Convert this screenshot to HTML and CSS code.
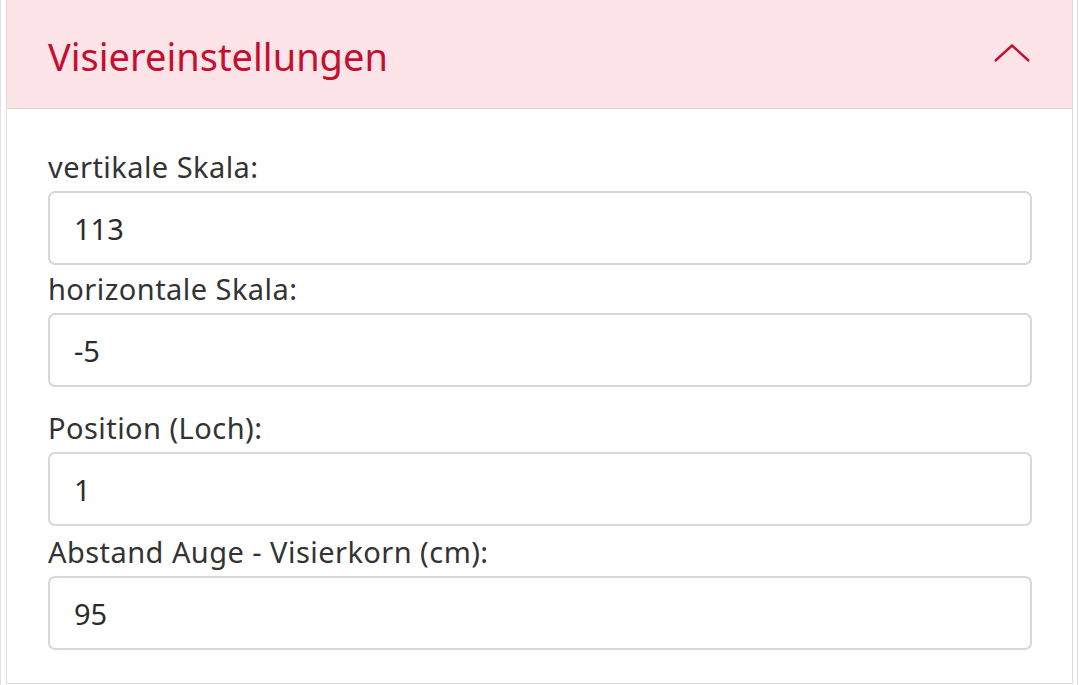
FILE: index.html
```html
<!DOCTYPE html>
<html lang="de">
<head>
  <meta charset="UTF-8">
  <title>Visiereinstellungen</title>
  <link rel="stylesheet" href="styles.css">
</head>
<body>
  <div class="frame">
    <div class="accordion-item">
      <div class="accordion-header">
        <span class="accordion-title">Visiereinstellungen</span>
        <svg class="chevron" width="36" height="18" viewBox="0 0 36 18">
          <path d="M1 17 L18 1.5 L35 17" fill="none" stroke="#c8102e" stroke-width="2.4"/>
        </svg>
      </div>
      <div class="accordion-body">
        <div class="field first">
          <label for="vskala">vertikale Skala:</label>
          <input id="vskala" class="form-control" type="text" value="113">
        </div>
        <div class="field">
          <label for="hskala">horizontale Skala:</label>
          <input id="hskala" class="form-control" type="text" value="-5">
        </div>
        <div class="field wide">
          <label for="loch">Position (Loch):</label>
          <input id="loch" class="form-control" type="text" value="1">
        </div>
        <div class="field last">
          <label for="abstand">Abstand Auge - Visierkorn (cm):</label>
          <input id="abstand" class="form-control" type="text" value="95">
        </div>
      </div>
    </div>
  </div>
</body>
</html>
```

FILE: styles.css
```css
body {
  margin: 0;
  background: #fff;
  font-family: "Noto Sans", "Open Sans", sans-serif;
  color: #2b2b2b;
}
.frame {
  width: 1078px;
  height: 685px;
  box-sizing: border-box;
  border-left: 1px solid #e2e2e2;
  border-right: 1px solid #e2e2e2;
  padding: 0 4px 0 5px;
}
.accordion-item {
  border: 1px solid #dcdcdc;
  border-top: none;
}
.accordion-header {
  height: 108px;
  background: #fce4e8;
  border-bottom: 1px solid #d9d2d3;
  display: flex;
  align-items: center;
  justify-content: space-between;
  padding: 0 42px 0 41px;
}
.accordion-title {
  color: #c40f2f;
  font-size: 38px;
  margin-top: 4px;
}
.chevron {
  display: block;
  margin-top: -2px;
}
.accordion-body {
  padding: 40px 40px 33px 41px;
}
.field {
  margin-top: 6px;
}
.field.first {
  margin-top: 0;
}
.field.wide {
  margin-top: 23px;
}
.field.last {
  margin-top: 8px;
}
label {
  display: block;
  font-size: 29px;
  line-height: 36px;
  margin-bottom: 6px;
  letter-spacing: 0.45px;
  color: #333;
}
.form-control {
  display: block;
  width: 100%;
  height: 74px;
  box-sizing: border-box;
  border: 2px solid #d6d6db;
  border-radius: 7px;
  padding: 0 24px;
  font-family: inherit;
  font-size: 29px;
  color: #2b2b2b;
  background: #fff;
  outline: none;
}
```
